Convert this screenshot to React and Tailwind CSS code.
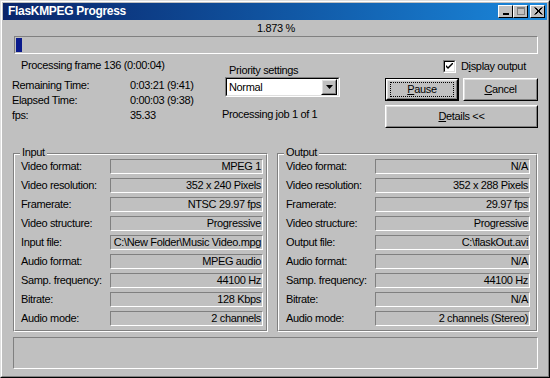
import React from "react";

const raised =
  "border border-t-white border-l-white border-r-black border-b-black";
const raisedInner =
  "border border-t-[#dfdfdf] border-l-[#dfdfdf] border-r-[#808080] border-b-[#808080]";
const sunken =
  "border border-t-[#808080] border-l-[#808080] border-r-white border-b-white";

const inputRows = [
  ["Video format:", "MPEG 1"],
  ["Video resolution:", "352 x 240 Pixels"],
  ["Framerate:", "NTSC 29.97 fps"],
  ["Video structure:", "Progressive"],
  ["Input file:", "C:\\New Folder\\Music Video.mpg"],
  ["Audio format:", "MPEG audio"],
  ["Samp. frequency:", "44100 Hz"],
  ["Bitrate:", "128 Kbps"],
  ["Audio mode:", "2 channels"],
];

const outputRows = [
  ["Video format:", "N/A"],
  ["Video resolution:", "352 x 288 Pixels"],
  ["Framerate:", "29.97 fps"],
  ["Video structure:", "Progressive"],
  ["Output file:", "C:\\flaskOut.avi"],
  ["Audio format:", "N/A"],
  ["Samp. frequency:", "44100 Hz"],
  ["Bitrate:", "N/A"],
  ["Audio mode:", "2 channels (Stereo)"],
];

const TitleButton = ({ children }) => (
  <div className={`w-[15px] h-[13px] bg-[#c0c0c0] ${raised} flex items-center justify-center`}>
    <svg width="10" height="9" viewBox="0 0 10 9">
      {children}
    </svg>
  </div>
);

const WinButton = ({ children, className = "", isDefault }) => (
  <div className={`${className} ${isDefault ? "border border-black" : ""}`}>
    <div className={`h-full bg-[#c0c0c0] ${raised}`}>
      <div className={`h-full ${raisedInner} flex items-center justify-center`}>
        {isDefault ? (
          <div className="h-[15px] w-[64px] border border-dotted border-black flex items-center justify-center">
            {children}
          </div>
        ) : (
          children
        )}
      </div>
    </div>
  </div>
);

const GroupBox = ({ title, rows, className, labelPad, boxWidth }) => (
  <div className={`relative ${className}`}>
    <div className="h-full border border-t-[#808080] border-l-[#808080] border-r-white border-b-white">
      <div className="h-full border border-t-white border-l-white border-r-[#808080] border-b-[#808080] pt-[4px]">
        <div className="flex flex-col gap-[4px]">
          {rows.map(([label, value]) => (
            <div key={label} className="flex items-center h-[15px]" style={{ paddingLeft: labelPad }}>
              <div className="w-[89px] whitespace-nowrap leading-[15px]">{label}</div>
              <div
                className={`${sunken} h-[15px] text-right pr-[1px] leading-[13px] whitespace-nowrap overflow-hidden`}
                style={{ width: boxWidth }}
              >
                {value}
              </div>
            </div>
          ))}
        </div>
      </div>
    </div>
    <div className="absolute left-[7px] top-[-7px] px-[2px] bg-[#c0c0c0] leading-[13px]">{title}</div>
  </div>
);

export default function App() {
  return (
    <div className="w-[550px] h-[378px] bg-[#c0c0c0] text-[11px] tracking-[-0.35px] text-black font-['Liberation_Sans',Arial,sans-serif]">
      <div className="h-full border border-t-[#dfdfdf] border-l-[#dfdfdf] border-r-black border-b-black">
        <div className="h-full border border-t-white border-l-white border-r-[#808080] border-b-[#808080] p-[1px]">
          {/* title bar */}
          <div className="h-[17px] bg-linear-to-r from-[#0a246a] to-[#1b88dc] flex items-center justify-between pl-[5px] pr-[2px]">
            <div className="text-white font-bold text-[12px] tracking-[-0.3px] leading-[17px]">FlasKMPEG Progress</div>
            <div className="flex items-center">
              <TitleButton>
                <rect x="2" y="6" width="6" height="2" fill="black" />
              </TitleButton>
              <TitleButton>
                <rect x="1.5" y="0.5" width="7" height="7" fill="none" stroke="#808080" />
                <rect x="1" y="1" width="8" height="1" fill="#808080" />
              </TitleButton>
              <div className="w-[2px]" />
              <TitleButton>
                <path d="M1.5 0.5 L8.5 7.5 M2.5 0.5 L9.5 7.5 M8.5 0.5 L1.5 7.5 M9.5 0.5 L2.5 7.5" stroke="black" strokeWidth="1" />
              </TitleButton>
            </div>
          </div>

          {/* percent */}
          <div className="h-[16px] leading-[16px] text-center pl-[2px]">1.873 %</div>

          {/* progress */}
          <div className={`ml-[11px] w-[524px] h-[18px] ${sunken} p-[1px]`}>
            <div className="w-[6px] h-full bg-[#0a1a8c]" />
          </div>

          {/* main section */}
          <div className="flex h-[92px]">
            <div className="ml-[9px] w-[210px]">
              <div className="pl-[9px] mt-[4px] leading-[14px]">Processing frame 136 (0:00:04)</div>
              <div className="mt-[6px]">
                {[
                  ["Remaining Time:", "0:03:21 (9:41)"],
                  ["Elapsed Time:", "0:00:03 (9:38)"],
                  ["fps:", "35.33"],
                ].map(([l, v]) => (
                  <div key={l} className="flex leading-[15px]">
                    <div className="w-[118px]">{l}</div>
                    <div>{v}</div>
                  </div>
                ))}
              </div>
            </div>

            <div className="w-[163px]">
              <div className="pl-[7px] mt-[9px] leading-[14px]">Priority settings</div>
              <div className={`ml-[3px] w-[115px] h-[20px] ${sunken}`}>
                <div className="h-full border border-t-black border-l-black border-r-[#dfdfdf] border-b-[#dfdfdf] bg-white flex items-center justify-between pr-[1px]">
                  <div className="pl-[2px] leading-[14px]">Normal</div>
                  <div className={`w-[16px] h-[16px] bg-[#c0c0c0] ${raised}`}>
                    <div className={`h-full ${raisedInner} flex items-center justify-center`}>
                      <svg width="7" height="4" viewBox="0 0 7 4">
                        <path d="M0 0 H7 L3.5 4 Z" fill="black" />
                      </svg>
                    </div>
                  </div>
                </div>
              </div>
              <div className="mt-[10px] leading-[14px]">Processing job 1 of 1</div>
            </div>

            <div className="w-[153px]">
              <div className="mt-[6px] pl-[58px] flex items-center gap-[5px] h-[13px]">
                <div className={`w-[13px] h-[13px] ${sunken}`}>
                  <div className="h-full border border-t-black border-l-black border-r-[#dfdfdf] border-b-[#dfdfdf] bg-white flex items-center justify-center">
                    <svg width="7" height="7" viewBox="0 0 7 7">
                      <path d="M0 2 L0 4 L2 6 L7 1 L7 -1 L2 4 Z" fill="black" />
                    </svg>
                  </div>
                </div>
                <div className="leading-[13px]">
                  D<span className="underline">i</span>splay output
                </div>
              </div>
              <div className="mt-[5px] flex gap-[4px]">
                <WinButton className="w-[74px] h-[23px]" isDefault>
                  <span>
                    <span className="underline">P</span>ause
                  </span>
                </WinButton>
                <WinButton className="w-[75px] h-[23px]">
                  <span>
                    <span className="underline">C</span>ancel
                  </span>
                </WinButton>
              </div>
              <WinButton className="mt-[4px] w-[153px] h-[23px]">
                <span>
                  <span className="underline">D</span>etails &lt;&lt;
                </span>
              </WinButton>
            </div>
          </div>

          {/* groups */}
          <div className="flex mt-[7px] ml-[10px] gap-[9px]">
            <GroupBox title="Input" rows={inputRows} className="w-[255px] h-[179px]" labelPad={6} boxWidth={153} />
            <GroupBox title="Output" rows={outputRows} className="w-[261px] h-[179px]" labelPad={7} boxWidth={155} />
          </div>

          {/* status */}
          <div className={`ml-[10px] mt-[5px] w-[525px] h-[32px] ${sunken}`} />
        </div>
      </div>
    </div>
  );
}
